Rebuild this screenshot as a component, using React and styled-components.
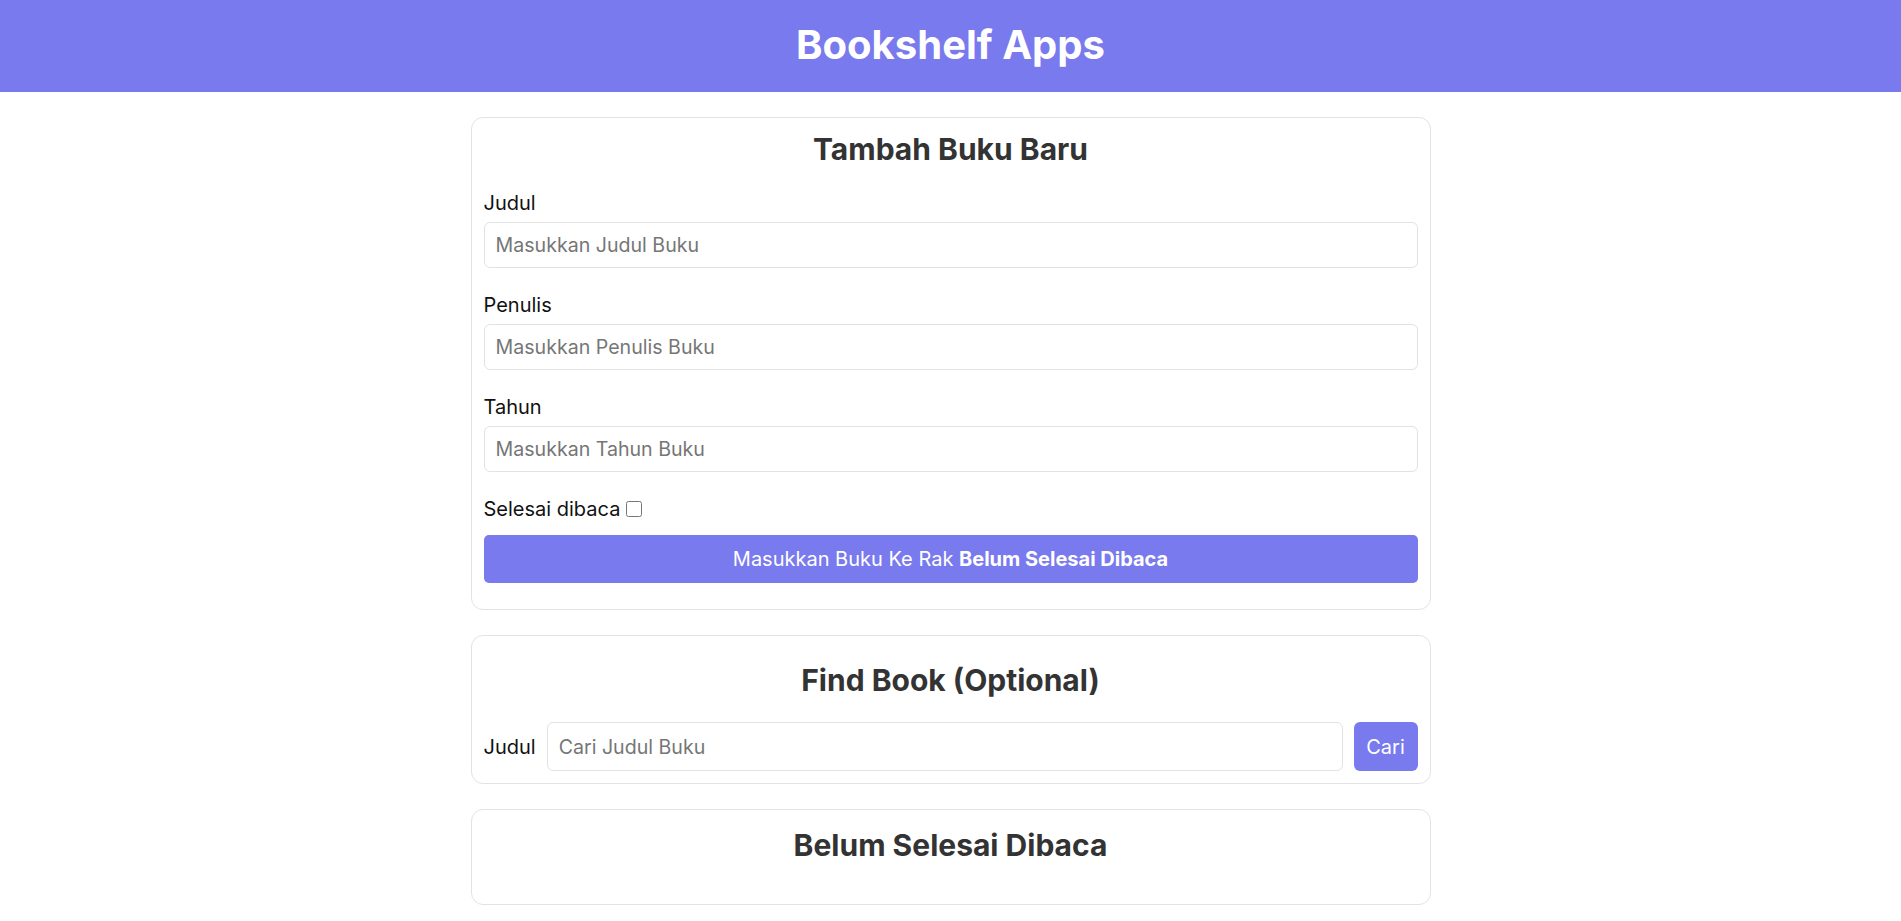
import React from "react";
import styled, { createGlobalStyle } from "styled-components";

const GlobalStyle = createGlobalStyle`
    html {
        overflow-y: scroll;
    }
    html::-webkit-scrollbar {
        width: 2px;
        background: #efefef;
    }
    body {
        margin: 0;
        font-family: Inter, "Noto Sans", sans-serif;
        color: #111;
        background: #fff;
    }
    * {
        box-sizing: border-box;
    }
`;

const Header = styled.header`
    height: 92px;
    background: #787aee;
    display: flex;
    align-items: center;
    justify-content: center;
`;

const HeaderTitle = styled.h1`
    margin: 0 0 3px;
    color: #fff;
    font-size: 40px;
    line-height: 48px;
    font-weight: 700;
`;

const Main = styled.main`
    width: 960px;
    margin: 0 auto;
    padding-top: 25px;
    display: flex;
    flex-direction: column;
    gap: 25px;
`;

const Card = styled.section`
    border: 1px solid #e3e3e3;
    border-radius: 12px;
    padding: 12px 12px ${({ bottom }) => bottom || 12}px;
`;

const CardTitle = styled.h2`
    margin: ${({ top }) => top || 0}px 0 0;
    font-size: 30px;
    line-height: 36px;
    font-weight: 700;
    color: #333;
    text-align: center;
`;

const Form = styled.form`
    display: flex;
    flex-direction: column;
    margin-top: 24px;
`;

const Group = styled.div`
    display: flex;
    flex-direction: column;
    gap: 7px;
    margin-bottom: 25px;
`;

const Label = styled.label`
    font-size: 20px;
    line-height: 24px;
    color: #111;
`;

const Input = styled.input`
    height: ${({ tall }) => (tall ? 49 : 46)}px;
    width: 100%;
    padding: 0 11px;
    border: 1px solid #e2e2e2;
    border-radius: 6px;
    font-family: inherit;
    font-size: 19.6px;
    color: #111;
    outline: none;
    &::placeholder {
        color: #767676;
    }
`;

const CheckRow = styled.label`
    display: flex;
    align-items: center;
    gap: 6px;
    font-size: 20px;
    line-height: 24px;
    color: #111;
`;

const Check = styled.input`
    width: 16px;
    height: 16px;
    margin: 0;
`;

const SubmitButton = styled.button`
    margin-top: 14px;
    height: 48px;
    border: none;
    border-radius: 5px;
    background: #787aee;
    color: #fff;
    font-family: inherit;
    font-size: 20px;
    cursor: pointer;
    strong {
        font-weight: 700;
    }
`;

const SearchRow = styled.form`
    display: flex;
    align-items: center;
    gap: 11px;
    margin-top: 24px;
`;

const SearchLabel = styled.label`
    font-size: 20px;
    color: #111;
    white-space: nowrap;
`;

const SearchButton = styled.button`
    flex: none;
    width: 64px;
    height: 49px;
    border: none;
    border-radius: 6px;
    background: #787aee;
    color: #fff;
    font-family: inherit;
    font-size: 20px;
    cursor: pointer;
`;

const fields = [
    { id: "title", label: "Judul", placeholder: "Masukkan Judul Buku" },
    { id: "author", label: "Penulis", placeholder: "Masukkan Penulis Buku" },
    { id: "year", label: "Tahun", placeholder: "Masukkan Tahun Buku" },
];

export default function App() {
    return (
        <>
            <GlobalStyle />
            <Header>
                <HeaderTitle>Bookshelf Apps</HeaderTitle>
            </Header>
            <Main>
                <Card bottom={26}>
                    <CardTitle top={1}>Tambah Buku Baru</CardTitle>
                    <Form onSubmit={(e) => e.preventDefault()}>
                        {fields.map((f) => (
                            <Group key={f.id}>
                                <Label htmlFor={f.id}>{f.label}</Label>
                                <Input id={f.id} placeholder={f.placeholder} />
                            </Group>
                        ))}
                        <CheckRow>
                            Selesai dibaca
                            <Check type="checkbox" />
                        </CheckRow>
                        <SubmitButton type="submit">
                            Masukkan Buku Ke Rak <strong>Belum Selesai Dibaca</strong>
                        </SubmitButton>
                    </Form>
                </Card>
                <Card bottom={12}>
                    <CardTitle top={14}>Find Book (Optional)</CardTitle>
                    <SearchRow onSubmit={(e) => e.preventDefault()}>
                        <SearchLabel htmlFor="search">Judul</SearchLabel>
                        <Input id="search" tall placeholder="Cari Judul Buku" />
                        <SearchButton type="submit">Cari</SearchButton>
                    </SearchRow>
                </Card>
                <Card bottom={41}>
                    <CardTitle top={5}>Belum Selesai Dibaca</CardTitle>
                </Card>
            </Main>
        </>
    );
}
